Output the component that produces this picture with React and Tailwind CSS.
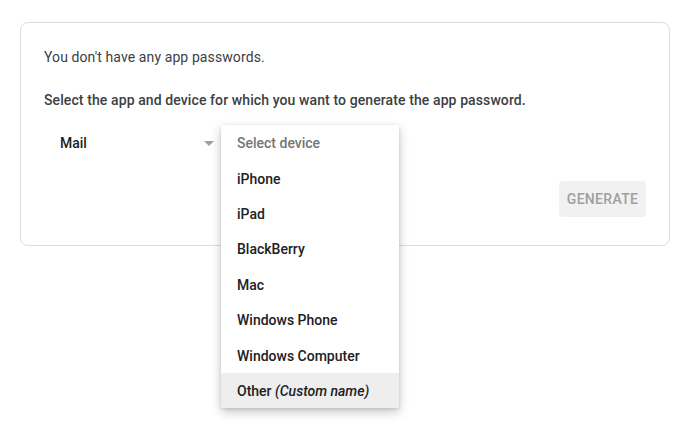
import React from "react";

const items = ["iPhone", "iPad", "BlackBerry", "Mac", "Windows Phone", "Windows Computer"];

export default function App() {
  return (
    <div className="w-[688px] h-[440px] bg-white relative" style={{ fontFamily: "Roboto, 'Noto Sans', sans-serif" }}>
      <div className="pt-[22px] pl-[20px]">
        <div className="w-[650px] h-[224px] border border-[#dadce0] rounded-[8px] px-[23px] pt-[24px] relative">
          <p className="text-[14px] leading-[20px] text-[#3c4043] tracking-[0.1px]">You don't have any app passwords.</p>
          <p className="mt-[23px] text-[14px] leading-[20px] font-medium text-[#3c4043] tracking-[0.1px]">
            Select the app and device for which you want to generate the app password.
          </p>
          <div className="mt-[13px] flex items-center h-[40px] w-[177px] relative">
            <span className="pl-[16px] text-[14px] font-medium text-[#202124]">Mail</span>
            <span className="absolute left-[160px] top-[18px] w-0 h-0 border-l-[5px] border-r-[5px] border-t-[5px] border-l-transparent border-r-transparent border-t-[#a0a0a0]"></span>
          </div>
          <div className="flex justify-end mt-[18px]">
            <button className="h-[36px] w-[87px] rounded-[4px] bg-[#f1f1f1] text-[14px] font-medium text-[#9e9e9e] tracking-[0.3px]">GENERATE</button>
          </div>
          <div className="absolute left-[200px] top-[102px] w-[178px] bg-white shadow-[0_4px_10px_rgba(0,0,0,0.22),0_1px_3px_rgba(0,0,0,0.12)] z-10">
            <div className="h-[35.4px] flex items-center pl-[16px] pt-[2px] text-[14px] font-medium text-[#757575]">Select device</div>
            {items.map((t) => (
              <div key={t} className="h-[35.4px] flex items-center pl-[16px] pt-[2px] text-[14px] font-medium text-[#202124]">{t}</div>
            ))}
            <div className="h-[35.4px] flex items-center pl-[16px] pt-[2px] text-[14px] font-medium text-[#202124] bg-[#eeeeee]">
              Other&nbsp;<span className="italic">(Custom name)</span>
            </div>
          </div>
        </div>
      </div>
    </div>
  );
}
